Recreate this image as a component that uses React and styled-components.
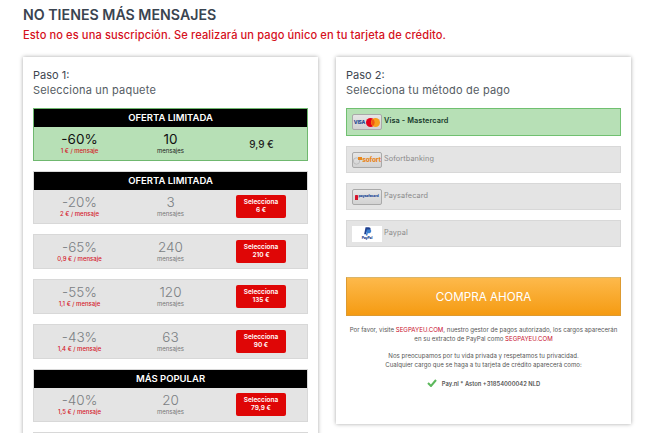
import React from "react";
import styled, { createGlobalStyle } from "styled-components";

const GlobalStyle = createGlobalStyle`
  html, body {
    margin: 0;
    padding: 0;
    background: #fff;
  }
  body {
    font-family: Inter, "Liberation Sans", Arial, sans-serif;
  }
`;

const Page = styled.div`
  width: 655px;
  height: 433px;
  overflow: hidden;
  padding: 6px 24px 0 23px;
  box-sizing: border-box;
`;

const Title = styled.h1`
  margin: 0;
  font-size: 14.2px;
  line-height: 18px;
  font-weight: 600;
  color: #3a4450;
`;

const Notice = styled.p`
  margin: 3px 0 13px;
  font-size: 11.1px;
  line-height: 17px;
  font-weight: 500;
  letter-spacing: 0.1px;
  color: #d5101c;
`;

const Columns = styled.div`
  display: flex;
  align-items: flex-start;
  gap: 18px;
`;

const Card = styled.section`
  width: 295px;
  flex: none;
  box-sizing: border-box;
  padding: 11px 10px 0;
  background: #fff;
  box-shadow: 0 0 4px rgba(0, 0, 0, 0.35);
  height: ${(p) => p.$height}px;
`;

const StepTitle = styled.div`
  font-size: 11px;
  line-height: 15px;
  color: #3d4650;
`;

const StepText = styled.div`
  font-size: 11px;
  line-height: 15px;
  letter-spacing: 0.2px;
  color: #555c63;
  margin-bottom: 10px;
`;

const Offer = styled.div`
  box-sizing: border-box;
  margin-bottom: 10px;
  background: ${(p) => (p.$active ? "#b7e0b6" : "#e4e4e4")};
  border: 1px solid ${(p) => (p.$active ? "#6fb86f" : "#d8d8d8")};
`;

const OfferHead = styled.div`
  height: 18px;
  background: #000;
  color: #fff;
  font-size: 9.5px;
  font-weight: 600;
  line-height: 18px;
  text-align: center;
`;

const OfferBody = styled.div`
  display: grid;
  grid-template-columns: repeat(3, 1fr);
  align-items: center;
  height: 33px;
  color: ${(p) => (p.$active ? "#111" : "#7b7f83")};
`;

const Cell = styled.div`
  display: flex;
  flex-direction: column;
  align-items: center;
  justify-content: center;
`;

const Big = styled.div`
  font-size: 13.5px;
  line-height: 15px;
  font-weight: ${(p) => (p.$active ? 400 : 300)};
`;

const PerUnit = styled.div`
  font-size: 6px;
  line-height: 8px;
  font-weight: 500;
  color: #d5192b;
`;

const Unit = styled.div`
  font-size: 6px;
  line-height: 8px;
  color: ${(p) => (p.$active ? "#222" : "#777")};
`;

const Price = styled.div`
  font-size: 10px;
  font-weight: 500;
  color: #222;
`;

const Select = styled.button`
  width: 50px;
  height: 23px;
  margin-right: 1px;
  padding: 0;
  border: 0;
  border-radius: 2px;
  background: #df0606;
  color: #fff;
  font-family: inherit;
  font-size: 6.5px;
  line-height: 7.5px;
  font-weight: 600;
`;

const Method = styled.div`
  display: flex;
  align-items: flex-start;
  gap: 2px;
  box-sizing: border-box;
  height: ${(p) => (p.$active ? 28 : 27)}px;
  margin-bottom: ${(p) => p.$gap ?? 10}px;
  padding: 5px;
  font-size: 7.3px;
  line-height: 13px;
  font-weight: ${(p) => (p.$active ? 600 : 400)};
  letter-spacing: 0.1px;
  color: ${(p) => (p.$active ? "#173a2c" : "#8a8a8a")};
  background: ${(p) => (p.$active ? "#b7e0b6" : "#e4e4e4")};
  border: 1px solid ${(p) => (p.$active ? "#70c070" : "#d8d8d8")};
`;

const Badge = styled.div`
  width: 30px;
  height: 16px;
  flex: none;
  box-sizing: border-box;
  display: flex;
  flex-direction: ${(p) => (p.$plain ? "column" : "row")};
  align-items: center;
  justify-content: center;
  border-radius: ${(p) => (p.$plain ? 0 : 2)}px;
  overflow: hidden;
  background: ${(p) => (p.$plain ? "#fff" : "linear-gradient(180deg, #e6e6e6, #d2d2d2)")};
  border: ${(p) => (p.$plain ? "0" : "1px solid #a9a9a9")};
`;

const BuyButton = styled.button`
  display: block;
  width: 100%;
  height: 39px;
  margin: 0 0 9px;
  padding: 0;
  border: 1px solid #dd9a30;
  border-top-color: #d9b56a;
  background: linear-gradient(180deg, #fdb94b 0%, #f59b12 100%);
  color: #fff;
  font-family: inherit;
  font-size: 11.7px;
  font-weight: 400;
`;

const Legal = styled.p`
  margin: 0 0 8px;
  font-size: 6.1px;
  line-height: 9px;
  text-align: center;
  color: #555;
`;

const Brand = styled.span`
  color: #c8102e;
`;

const Descriptor = styled.div`
  display: flex;
  align-items: center;
  justify-content: center;
  gap: 5px;
  margin-top: 10px;
  font-size: 5.8px;
  font-weight: 600;
  color: #555;
`;

const MiniLabel = styled.span`
  font-size: ${(p) => p.$size}px;
  font-weight: 800;
  color: ${(p) => p.$color};
  letter-spacing: -0.2px;
  line-height: 1;
`;

const VisaLogo = () => (
  <>
    <MiniLabel $size={5} $color="#28468f">VISA</MiniLabel>
    <svg width="14" height="9" viewBox="0 0 14 9" style={{ marginLeft: 1 }}>
      <circle cx="4.5" cy="4.5" r="4.5" fill="#e4001b" />
      <circle cx="9.5" cy="4.5" r="4.5" fill="#f79e1b" />
      <path d="M7 1a4.5 4.5 0 0 1 0 7a4.5 4.5 0 0 1 0-7z" fill="#f2590f" />
    </svg>
  </>
);

const SofortLogo = () => (
  <>
    <svg width="9" height="9" viewBox="0 0 9 9">
      <circle cx="3.500" cy="5" r="3.200" fill="none" stroke="#bdbdbd" />
      <rect x="5" y="1" width="4" height="3" fill="#e8871e" />
    </svg>
    <MiniLabel $size={6.5} $color="#e8871e">sofort</MiniLabel>
  </>
);

const PaysafeLogo = () => (
  <>
    <svg width="3" height="5" viewBox="0 0 3 5">
      <rect width="3" height="5" rx="0.6" fill="#d8132a" />
    </svg>
    <MiniLabel $size={3.6} $color="#2a4d9c">paysafecard</MiniLabel>
  </>
);

const PaypalLogo = () => (
  <>
    <svg width="9" height="10" viewBox="0 0 12 13">
      <path d="M3.4 0h4c2 0 3 1.100 2.700 2.900-.4 2.200-1.900 3.200-4 3.200H4.600L4 9.500H1.500z" fill="#1f3f8f" />
      <path d="M5 3h4.400c1.400.4 1.800 1.400 1.500 2.700-.4 1.700-1.700 2.500-3.500 2.500H6.300L5.800 11H3.900z" fill="#3a7fd0" />
    </svg>
    <MiniLabel $size={3.5} $color="#1f3f8f">PayPal</MiniLabel>
  </>
);

const offers = [
  { head: "OFERTA LIMITADA", off: "-20%", each: "2 € / mensaje", count: "3", price: "6 €" },
  { off: "-65%", each: "0,9 € / mensaje", count: "240", price: "210 €" },
  { off: "-55%", each: "1,1 € / mensaje", count: "120", price: "135 €" },
  { off: "-43%", each: "1,4 € / mensaje", count: "63", price: "90 €" },
  { head: "MÁS POPULAR", off: "-40%", each: "1,5 € / mensaje", count: "20", price: "79,9 €" },
];

const methods = [
  { name: "Visa - Mastercard", logo: <VisaLogo />, active: true },
  { name: "Sofortbanking", logo: <SofortLogo /> },
  { name: "Paysafecard", logo: <PaysafeLogo /> },
  { name: "Paypal", logo: <PaypalLogo />, plain: true, gap: 30 },
];

export default function App() {
  return (
    <Page>
      <GlobalStyle />
      <Title>NO TIENES MÁS MENSAJES</Title>
      <Notice>Esto no es una suscripción. Se realizará un pago único en tu tarjeta de crédito.</Notice>
      <Columns>
        <Card $height={420}>
          <StepTitle>Paso 1:</StepTitle>
          <StepText>Selecciona un paquete</StepText>
          <Offer $active>
            <OfferHead>OFERTA LIMITADA</OfferHead>
            <OfferBody $active>
              <Cell>
                <Big $active>-60%</Big>
                <PerUnit>1 € / mensaje</PerUnit>
              </Cell>
              <Cell>
                <Big $active>10</Big>
                <Unit $active>mensajes</Unit>
              </Cell>
              <Cell>
                <Price>9,9 €</Price>
              </Cell>
            </OfferBody>
          </Offer>
          {offers.map((o) => (
            <Offer key={o.off}>
              {o.head && <OfferHead>{o.head}</OfferHead>}
              <OfferBody>
                <Cell>
                  <Big>{o.off}</Big>
                  <PerUnit>{o.each}</PerUnit>
                </Cell>
                <Cell>
                  <Big>{o.count}</Big>
                  <Unit>mensajes</Unit>
                </Cell>
                <Cell>
                  <Select>
                    Selecciona
                    <br />
                    {o.price}
                  </Select>
                </Cell>
              </OfferBody>
            </Offer>
          ))}
          {/* next package is cut by the page edge, only its top shows */}
          <Offer>
            <OfferBody />
          </Offer>
        </Card>
        <Card $height={367}>
          <StepTitle>Paso 2:</StepTitle>
          <StepText>Selecciona tu método de pago</StepText>
          {methods.map((m) => (
            <Method key={m.name} $active={m.active} $gap={m.gap}>
              <Badge $plain={m.plain}>{m.logo}</Badge>
              {m.name}
            </Method>
          ))}
          <BuyButton>COMPRA AHORA</BuyButton>
          <Legal>
            Por favor, visite <Brand>SEGPAYEU.COM</Brand>, nuestro gestor de pagos autorizado, los cargos aparecerán
            <br />
            en su extracto de PayPal como <Brand>SEGPAYEU.COM</Brand>
          </Legal>
          <Legal>
            Nos preocupamos por tu vida privada y respetamos tu privacidad.
            <br />
            Cualquier cargo que se haga a tu tarjeta de crédito aparecerá como:
          </Legal>
          <Descriptor>
            <svg width="10" height="8" viewBox="0 0 10 8">
              <path d="M1 4l3 3 5-6" fill="none" stroke="#5cb85c" strokeWidth="2" />
            </svg>
            Pay.nl * Aston +31854000042 NLD
          </Descriptor>
        </Card>
      </Columns>
    </Page>
  );
}
